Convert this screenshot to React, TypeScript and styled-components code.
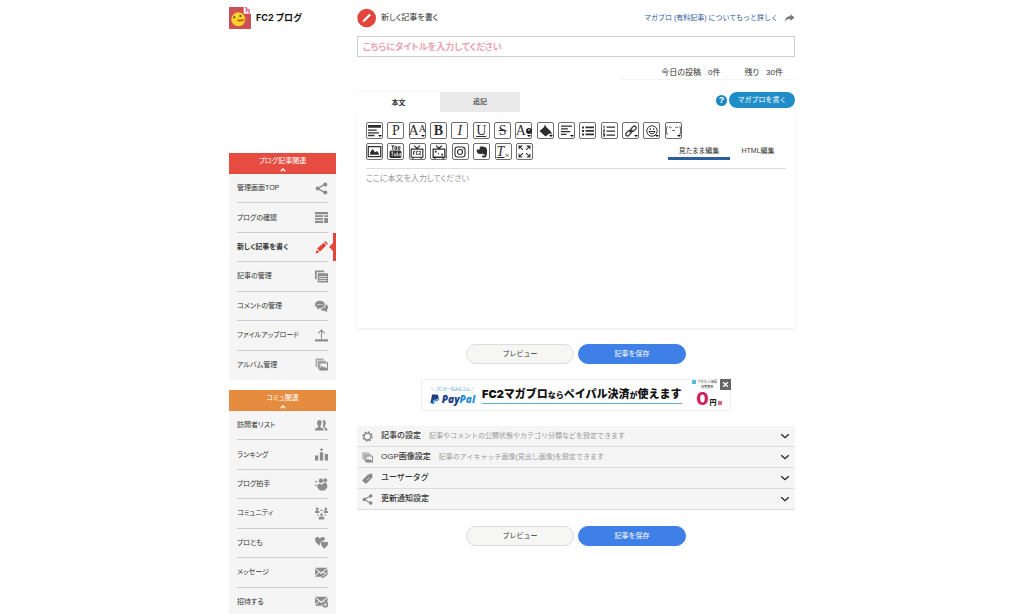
import React from "react";
import styled, { createGlobalStyle, css } from "styled-components";

const Global = createGlobalStyle`
  * { box-sizing: border-box; }
  body {
    margin: 0;
    background: #fff;
    color: #333;
    font-family: "Liberation Sans", "Noto Sans CJK JP", sans-serif;
    font-feature-settings: "palt";
    font-size: 8px;
    line-height: 12px;
  }
  button, input, textarea {
    font: inherit;
    font-feature-settings: inherit;
    color: inherit;
    margin: 0;
    padding: 0;
    border: 0;
    background: none;
  }
  button { cursor: pointer; }
  a { color: inherit; text-decoration: none; }
  ul, h1, h2, p { margin: 0; padding: 0; font: inherit; list-style: none; }
  h1 { font-feature-settings: "palt"; }
  svg { display: block; flex: none; }
`;

const Page = styled.div`
  display: grid;
  grid-template-columns: 107px minmax(0, 1fr);
  column-gap: 21px;
  max-width: 566px;
  margin: 0 auto;
`;

/* ---------- Sidebar ---------- */

const Sidebar = styled.aside`
  display: flex;
  flex-direction: column;
`;

const Brand = styled.a`
  display: flex;
  align-items: center;
  gap: 5px;
  height: 36px;
  margin-bottom: 117px;
  color: #111;
  font-size: 9px;
  font-weight: 700;
  font-family: Inter, "Noto Sans CJK JP", sans-serif;
`;

const MenuGroup = styled.nav`
  margin-bottom: 10px;
`;

const MenuHeader = styled.button<{ $color: string }>`
  display: flex;
  flex-direction: column;
  align-items: center;
  width: 100%;
  height: 21px;
  padding-top: 2px;
  background: ${(p) => p.$color};
  color: #fff;
  font-size: 7px;
`;

const MenuList = styled.ul`
  display: flex;
  flex-direction: column;
  min-height: 206px;
  padding: 0 8px;
  background: #f5f5f5;
`;

const MenuItem = styled.li`
  display: flex;
  flex: 1;
  border-bottom: 1px solid #ccc;
  &:last-child { border-bottom-color: transparent; }
`;

const MenuLink = styled.a<{ $active?: boolean }>`
  display: flex;
  flex: 1;
  align-items: center;
  justify-content: space-between;
  position: relative;
  font-size: 7px;
  color: #333;
  svg { color: #8c8c8c; }
  ${(p) =>
    p.$active &&
    css`
      font-weight: 700;
      svg { color: #e2453c; }
      &::before {
        content: "";
        position: absolute;
        right: -8px;
        top: 0;
        bottom: 0;
        width: 3px;
        background: #e2453c;
      }
      &::after {
        content: "";
        position: absolute;
        right: -5px;
        top: 50%;
        margin-top: -4px;
        border: 4px solid transparent;
        border-left: 0;
        border-right-color: #e2453c;
      }
    `}
`;

/* ---------- Main column ---------- */

const Main = styled.main`
  display: flex;
  flex-direction: column;
`;

const TopBar = styled.header`
  display: flex;
  align-items: center;
  justify-content: space-between;
  height: 36px;
`;

const PageTitle = styled.h1`
  display: flex;
  align-items: center;
  gap: 4px;
`;

const MoreLink = styled.a`
  display: flex;
  align-items: center;
  gap: 6px;
  font-size: 7px;
  font-feature-settings: normal;
  color: #2b5797;
`;

const TitleInput = styled.input`
  width: 100%;
  height: 21px;
  padding: 0 5px;
  border: 1px solid #ccc;
  font-size: 9px;
  font-weight: 700;
  &::placeholder { color: #eba0b1; opacity: 1; }
`;

const Stats = styled.div`
  display: flex;
  justify-content: flex-end;
  gap: 24px;
  align-self: flex-end;
  width: 40%;
  height: 23px;
  padding: 10px 12px 0 0;
  border-bottom: 1px solid #f5f5f5;
`;

const Stat = styled.p`
  display: flex;
  gap: 7px;
`;

const TabBar = styled.div`
  display: flex;
  align-items: flex-start;
  height: 21px;
  margin-top: 12px;
`;

const Tab = styled.button<{ $active?: boolean }>`
  width: ${(p) => (p.$active ? 83 : 80)}px;
  height: ${(p) => (p.$active ? 22 : 20)}px;
  background: ${(p) => (p.$active ? "#fff" : "#e9e9e9")};
  box-shadow: ${(p) => (p.$active ? "0 -1px 2px #f4f4f4" : "none")};
  font-size: 7px;
  font-weight: ${(p) => (p.$active ? 700 : 500)};
`;

const PaidGroup = styled.div`
  display: flex;
  align-items: center;
  gap: 2px;
  margin-left: auto;
`;

const HelpButton = styled.button`
  width: 11px;
  height: 11px;
  border-radius: 50%;
  background: #1b87bf;
  color: #fff;
  font-size: 9px;
  font-weight: 700;
  line-height: 11px;
`;

const PaidButton = styled.button`
  width: 66px;
  height: 16px;
  border-radius: 8px;
  background: #1f8ec8;
  color: #fff;
  font-size: 7px;
  font-feature-settings: normal;
`;

const Editor = styled.section`
  padding: 9px 9px 0;
  box-shadow: 0 1px 3px #ececec;
`;

const ToolRow = styled.div`
  display: flex;
  justify-content: space-between;
  margin-bottom: 4px;
`;

const Tools = styled.div<{ $width: number }>`
  display: flex;
  justify-content: space-between;
  width: ${(p) => p.$width}px;
`;

const Tool = styled.button<{ $menu?: boolean }>`
  display: flex;
  align-items: center;
  justify-content: center;
  position: relative;
  width: 17px;
  height: 17px;
  border: 1px solid #6e6e6e;
  border-radius: 2px;
  color: #2e2e2e;
  font-family: "Liberation Serif", serif;
  font-size: 14px;
  line-height: 15px;
  ${(p) =>
    p.$menu &&
    css`
      &::after {
        content: "";
        position: absolute;
        right: 0;
        bottom: 1px;
        border: 2px solid transparent;
        border-bottom: 0;
        border-top-color: #111;
      }
    `}
`;

const Modes = styled.div`
  display: flex;
  align-items: flex-end;
`;

const Mode = styled.button<{ $active?: boolean }>`
  width: ${(p) => (p.$active ? 62 : 56)}px;
  height: 17px;
  padding-top: 2px;
  border-bottom: 3px solid ${(p) => (p.$active ? "#2c5d9f" : "transparent")};
  font-size: 7px;
`;

const BodyInput = styled.textarea`
  display: block;
  width: 100%;
  height: 160px;
  margin-top: 8px;
  padding-top: 4px;
  border-top: 1px solid #ddd;
  resize: none;
  &::placeholder { color: #999; opacity: 1; }
`;

const Actions = styled.div`
  display: flex;
  justify-content: center;
  gap: 4px;
  margin: 16px 0 15px;
`;

const ActionButton = styled.button<{ $primary?: boolean }>`
  width: 108px;
  height: 20px;
  border: 1px solid ${(p) => (p.$primary ? "#3f7fe8" : "#ddd")};
  border-radius: 10px;
  background: ${(p) => (p.$primary ? "#3f7fe8" : "#f6f6f5")};
  color: ${(p) => (p.$primary ? "#fff" : "#333")};
  font-size: 7px;
  font-feature-settings: normal;
`;

/* ---------- Campaign banner ---------- */

const Banner = styled.section`
  display: flex;
  align-items: center;
  align-self: center;
  position: relative;
  width: 310px;
  height: 32px;
  margin-bottom: 15px;
  padding: 0 4px 0 7px;
  border: 1px solid #f1f1f1;
  font-family: "Noto Sans CJK JP", sans-serif;
`;

const Partner = styled.div`
  display: flex;
  flex-direction: column;
  align-items: center;
  width: 47px;
  margin-right: 6px;
  color: #2f93c4;
  font-size: 4px;
  line-height: 8px;
`;

const PartnerName = styled.span`
  display: flex;
  align-items: center;
  gap: 2px;
  color: #1c3f86;
  font-family: "Open Sans", sans-serif;
  font-size: 10px;
  font-weight: 800;
  font-style: italic;
  line-height: 12px;
  b { color: #2a8fd0; font-weight: 800; }
`;

const Slogan = styled.a`
  border-bottom: 1px solid #58b5c0;
  color: #111;
  font-family: Inter, "Noto Sans CJK JP", sans-serif;
  font-size: 11px;
  font-weight: 900;
  font-feature-settings: normal;
  line-height: 16px;
  white-space: nowrap;
  small { font-size: 8px; }
`;

const Offer = styled.div`
  display: flex;
  flex-direction: column;
  align-items: center;
  margin-left: auto;
  color: #222;
  font-size: 3px;
  line-height: 5px;
`;

const OfferNote = styled.span`
  display: flex;
  gap: 2px;
  margin-right: 9px;
  text-align: center;
  white-space: nowrap;
`;

const OfferText = styled.span`
  display: flex;
  flex-direction: column;
`;

const Swatch = styled.i<{ $color: string }>`
  width: 4px;
  height: 4px;
  background: ${(p) => p.$color};
`;

const OfferPrice = styled.span`
  display: flex;
  align-items: baseline;
  gap: 1px;
  font-size: 7px;
  font-weight: 900;
  line-height: 18px;
  b {
    color: #cc1f60;
    font-family: Inter, sans-serif;
    font-size: 18px;
    font-weight: 800;
  }
`;

const CloseButton = styled.button`
  display: flex;
  align-items: center;
  justify-content: center;
  position: absolute;
  top: -1px;
  right: -1px;
  width: 11px;
  height: 11px;
  background: #666;
  color: #fff;
`;

/* ---------- Settings accordion ---------- */

const Settings = styled.section`
  background: #f5f5f5;
`;

const SettingRow = styled.button`
  display: flex;
  align-items: center;
  width: 100%;
  height: 21px;
  padding: 0 5px;
  border-bottom: 1px solid #ddd;
  font-size: 8px;
  font-feature-settings: normal;
  text-align: left;
  svg { color: #888; }
  svg:last-child { margin-left: auto; color: #222; }
`;

const SettingName = styled.span`
  margin: 0 8px;
  font-weight: 500;
`;

const SettingNote = styled.span`
  color: #999;
  font-size: 7px;
`;

/* ---------- Icons ---------- */

const share = (
  <>
    <path d="M19 4 5 12l14 8" fill="none" stroke="currentColor" strokeWidth="2.5" />
    <circle cx="19" cy="4.5" r="3.8" />
    <circle cx="5" cy="12" r="3.8" />
    <circle cx="19" cy="19.5" r="3.8" />
  </>
);
const photos = (
  <>
    <path d="M1 1h15v3H4v12H1z" opacity=".7" />
    <path d="M5 5h15v3H8v12H5z" opacity=".8" />
    <path fillRule="evenodd" d="M8 8h16v15H8zM10 10v9l3-5 3 4 2-2 4 4V10z" />
  </>
);
const envelope = (
  <path d="M0 3h23L11.500 12zM0 5l7 6-7 6zM23 5l-7 6 7 3zM8 12l3.500 3 3.500-3 3 2-6 6H0z" />
);

const ICONS: Record<string, React.ReactNode> = {
  share,
  photos,
  layout: <path d="M0 2h24v4H0zM0 8h15v3H0zM0 13h15v3H0zM0 18h15v4H0zM17 8h7v3h-7zM17 13h7v9h-7z" />,
  pencil: <path d="M1 23l2-7 5 5zM4 14 16 3l5 5L9 20zM17 2l2-2 5 5-2 2z" />,
  pages: (
    <>
      <path d="M0 1h17v3H3v13H0z" />
      <path d="M5 6h19v17H5zM7 11v1.500h15V11zM7 15v1.500h15V15zM7 19v1.500h15V19z" fillRule="evenodd" />
    </>
  ),
  comments: (
    <>
      <path d="M9 3c5 0 9 3 9 7s-4 7-9 7l-5 3 1-4c-3-1-5-3-5-6 0-4 4-7 9-7z" />
      <path d="M20 9c5 3 5 8 2 11l1 4-5-2c-4 0-7-1-8-4 6 0 10-4 10-9z" />
      <path d="M4 9h2v2H4zM8 9h2v2H8zM12 9h2v2h-2z" fill="#f5f5f5" />
    </>
  ),
  upload: (
    <>
      <path d="M12 18V3M6 8l6-6 6 6" fill="none" stroke="currentColor" strokeWidth="2" />
      <path d="M0 19h24v4H0z" />
    </>
  ),
  people: (
    <>
      <path d="M8 2c6 0 5 8 2 11v2l6 3v3H0v-3l6-3v-2C3 10 3 2 8 2z" />
      <path d="M14 2c7-1 7 7 4 11v2l5 3v3h-5v-4l-4-3c2-4 2-8 0-12z" />
    </>
  ),
  ranking: <path d="M0 14h6v9H0zM9 8h6v15H9zM18 11h6v12h-6zM12 0l3 3-3 3-3-3z" />,
  clap: (
    <>
      <path d="M5 12l4-2 3 3 6-5 4 3 1 6-5 6H9l-5-6z" />
      <circle cx="11" cy="5" r="4" />
      <circle cx="19" cy="4" r="3.500" />
      <path d="M0 5l5 1-3 3zM0 12l4 1-3 3z" />
    </>
  ),
  community: (
    <>
      <circle cx="4" cy="3.500" r="2.5" />
      <circle cx="20" cy="3.500" r="2.5" />
      <circle cx="12" cy="14" r="2.500" />
      <path d="M0 11V8l4-2 4 2v3zM16 11V8l4-2 4 2v3zM7 23v-4l5-2 5 2v4z" />
      <path d="M9 6h6M4 13l3 4M20 13l-3 4" fill="none" stroke="currentColor" strokeWidth="1.800" />
    </>
  ),
  hearts: (
    <>
      <path d="M9 18C-3 11-1 2 4 2c2 0 4 1 5 3 1-2 3-3 5-3 4 0 5 3 4 6-6 0-9 4-9 10z" />
      <path d="M17 23c-7-5-8-13-3-13 2 0 3 1 4 2 1-1 3-2 5-1 3 2 0 9-6 12z" />
    </>
  ),
  message: (
    <>
      {envelope}
      <path d="M12 23l1-3 9-7 2 2-9 7z" />
    </>
  ),
  invite: (
    <>
      {envelope}
      <circle cx="19" cy="18" r="5.5" />
      <path d="M19 15v6M16 18h6" stroke="#f5f5f5" strokeWidth="1.500" />
    </>
  ),
  gear: (
    <>
      <circle cx="12" cy="12" r="7.500" fill="none" stroke="currentColor" strokeWidth="3" />
      <circle cx="12" cy="12" r="10" fill="none" stroke="currentColor" strokeWidth="3" strokeDasharray="4 3.850" />
    </>
  ),
  tag: <path d="M1 15 13 3l9-2 1 8-12 13c-2 2-3 2-5 0l-4-4c-2-1-2-2-1-3zM10 15l1 1 6-6-1-1z" fillRule="evenodd" />,
  forward: <path d="M1 21c1-9 6-13 13-13V3l10 8-10 8v-5c-6 0-10 2-13 7z" />,
  down: <path d="M3 8l9 8 9-8" fill="none" stroke="currentColor" strokeWidth="3.200" />,
  up: <path d="M3 17l9-9 9 9" fill="none" stroke="currentColor" strokeWidth="5" />,
  close: <path d="M4 4l16 16M20 4 4 20" fill="none" stroke="currentColor" strokeWidth="4.500" />,
  paypal: (
    <>
      <path d="M5 1h10c8 0 8 13-3 13H9l-2 8H1z" fill="#1c3f86" />
      <path d="M21 7c4 7-2 11-10 11l-1 6H5l1-4h3l1-5h4c4 0 7-3 7-8z" fill="#2a8fd0" />
    </>
  ),
  template: <path d="M0 2h24v5H0zM0 10h16v2.500H0zM0 15h20v2.500H0zM0 20h12v2.500H0z" />,
  bucket: <path d="M11 1l2 4 8 8c2 2 3 5 2 7l-3-3-8 6L1 13l8-7z" />,
  alignLeft: <path d="M0 1h24v3H0zM0 7h15v3H0zM0 13h20v3H0zM0 19h12v3H0z" />,
  bullets: <path d="M0 3h4v4H0zM0 10h4v4H0zM0 17h4v4H0zM7 3h17v3.500H7zM7 10h17v3.500H7zM7 17h17v3.500H7z" />,
  numbers: <path d="M1 1h2v6H1zM0 9h4v2l-2 3h2v1H0v-2l2-2H0zM0 17h4v6H0v-1h2v-1H0zM7 3h17v2.500H7zM7 11h17v2.500H7zM7 19h17v2.500H7z" />,
  link: (
    <g fill="none" stroke="currentColor" strokeWidth="2.500">
      <rect x="1" y="13" width="12" height="7" rx="3.500" transform="rotate(-45 7 16.500)" />
      <rect x="11" y="4" width="12" height="7" rx="3.500" transform="rotate(-45 17 7.500)" />
      <path d="M9 15l6-6" />
    </g>
  ),
  smile: (
    <g fill="none" stroke="currentColor" strokeWidth="2">
      <circle cx="12" cy="12" r="10.500" />
      <path d="M6 13c1 6 11 6 12 0zM8.500 6v4M15.500 6v4" />
    </g>
  ),
  kaomoji: (
    <path
      d="M2 5c-2 5-2 9 0 14M22 5c2 5 2 9 0 14M5 8l2-2 2 2M15 8l2-2 2 2M10 12h4"
      fill="none"
      stroke="currentColor"
      strokeWidth="1.300"
    />
  ),
  image: (
    <>
      <path d="M2 4h20v16H2z" fill="none" stroke="currentColor" strokeWidth="2" />
      <path d="M5 17v-4l4-5 4 5 3-2 3 4v2z" />
    </>
  ),
  youtube: (
    <>
      <path d="M5 0l2 4 2-4M7 4v5M11 3h3v5h-3zM17 2v6h3V2" fill="none" stroke="currentColor" strokeWidth="1.800" />
      <rect x="1" y="10" width="22" height="14" rx="3" />
      <path d="M4 13h4M6 13v8M10 15v5h3v-5M15 12v8h2v-4M22 20h-2v-4h2v2h-2" fill="none" stroke="#fff" strokeWidth="1.300" />
    </>
  ),
  tv: (
    <>
      <path d="M7 1l5 5 5-5M2 7h20v14H2zM5 21v3M19 21v3" fill="none" stroke="currentColor" strokeWidth="2" />
      <path d="M6 17v-6h3M6 14h2M14 11h-3v5h3M15 11h3v2l-3 3h4" fill="none" stroke="currentColor" strokeWidth="1.500" />
    </>
  ),
  tvLive: (
    <>
      <path d="M7 1l5 5 5-5M2 7h20v14H2zM5 21v3M19 21v3" fill="none" stroke="currentColor" strokeWidth="2.200" />
      <path d="M5 10h3v3H5zM16 15h3v3h-3zM10 14h2v2h-2z" />
    </>
  ),
  instagram: (
    <g fill="none" stroke="currentColor" strokeWidth="2.200">
      <rect x="2" y="2" width="20" height="20" rx="5" />
      <circle cx="12" cy="12" r="5" />
      <path d="M17 6h2" />
    </g>
  ),
  elephant: (
    <path d="M8 1h6c5 1 8 2 8 8 0 7-1 14-4 14h-4c-3-1-2-5 1-5v2c2 0 3-1 2-3-3-1-5-2-5-2-2 2-7 1-9-1-2-3-2-6-1-7h5z" />
  ),
  expand: (
    <path
      d="M2 8V2h6M16 2h6v6M22 16v6h-6M8 22H2v-6M2 2l7 7M22 2l-7 7M22 22l-7-7M2 22l7-7"
      fill="none"
      stroke="currentColor"
      strokeWidth="2"
    />
  ),
};

const Icon = ({ name, size = 13 }: { name: string; size?: number }) => (
  <svg width={size} height={size} viewBox="0 0 24 24" fill="currentColor" aria-hidden="true">
    {ICONS[name]}
  </svg>
);

const Logo = () => (
  <svg width="22" height="22" viewBox="0 0 66 66" aria-hidden="true">
    <path d="M0 0h44l22 20v46H0z" fill="#cf4f56" />
    <path d="M44 0v20h22z" fill="#fff" />
    <path d="M48 3c3-3 6 0 5 4l-2 9M54 10c5-5 11 2 4 9" fill="none" stroke="#e0668c" strokeWidth="4" />
    <circle cx="28" cy="37" r="21" fill="#fbd32b" />
    <circle cx="16" cy="31" r="3" fill="#4b3210" />
    <circle cx="34" cy="27" r="3" fill="#4b3210" />
    <path d="M24 38l20-3c5 0 5 8-1 8l-12 2c-4 0-6-3-7-7z" fill="#e88a22" />
    <path d="M25 40l18 0" stroke="#a04a12" strokeWidth="2" />
  </svg>
);

const TitleBadge = () => (
  <svg width="20" height="20" viewBox="0 0 60 60" aria-hidden="true">
    <circle cx="29" cy="30" r="28" fill="#e2453c" />
    <path d="M16 43l3-8 18-18 5 5-18 18z" fill="#fff" />
  </svg>
);

/* ---------- Content ---------- */

type Entry = { label: string; icon: string; active?: boolean };

const BLOG_MENU: Entry[] = [
  { label: "管理画面TOP", icon: "share" },
  { label: "ブログの確認", icon: "layout" },
  { label: "新しく記事を書く", icon: "pencil", active: true },
  { label: "記事の管理", icon: "pages" },
  { label: "コメントの管理", icon: "comments" },
  { label: "ファイルアップロード", icon: "upload" },
  { label: "アルバム管理", icon: "photos" },
];

const COMMUNITY_MENU: Entry[] = [
  { label: "訪問者リスト", icon: "people" },
  { label: "ランキング", icon: "ranking" },
  { label: "ブログ拍手", icon: "clap" },
  { label: "コミュニティ", icon: "community" },
  { label: "ブロとも", icon: "hearts" },
  { label: "メッセージ", icon: "message" },
  { label: "招待する", icon: "invite" },
];

const SETTINGS = [
  { icon: "gear", name: "記事の設定", note: "記事やコメントの公開状態やカテゴリ分類などを設定できます" },
  { icon: "photos", name: "OGP画像設定", note: "記事のアイキャッチ画像(見出し画像)を設定できます" },
  { icon: "tag", name: "ユーザータグ" },
  { icon: "share", name: "更新通知設定" },
];

const Menu = ({ title, color, items }: { title: string; color: string; items: Entry[] }) => (
  <MenuGroup aria-label={title}>
    <MenuHeader $color={color}>
      {title}
      <Icon name="up" size={6} />
    </MenuHeader>
    <MenuList>
      {items.map((item) => (
        <MenuItem key={item.label}>
          <MenuLink href="#" $active={item.active}>
            {item.label}
            <Icon name={item.icon} />
          </MenuLink>
        </MenuItem>
      ))}
    </MenuList>
  </MenuGroup>
);

const SaveActions = () => (
  <Actions>
    <ActionButton>プレビュー</ActionButton>
    <ActionButton $primary>記事を保存</ActionButton>
  </Actions>
);

const SmallCap = styled.span`
  align-self: flex-start;
  font-size: 10px;
  line-height: 11px;
`;

const Sub = styled.sub`
  align-self: flex-end;
  font-size: 9px;
  line-height: 8px;
`;

export default function App() {
  return (
    <>
      <Global />
      <Page>
        <Sidebar>
          <Brand href="#">
            <Logo />
            FC2 ブログ
          </Brand>
          <Menu title="ブログ記事関連" color="#e64c40" items={BLOG_MENU} />
          <Menu title="コミュ関連" color="#e58c3e" items={COMMUNITY_MENU} />
        </Sidebar>

        <Main>
          <TopBar>
            <PageTitle>
              <TitleBadge />
              新しく記事を書く
            </PageTitle>
            <MoreLink href="#">
              マガブロ (有料記事) についてもっと詳しく
              <svg width="11" height="10" viewBox="0 0 24 24" fill="#777" aria-hidden="true">
                {ICONS.forward}
              </svg>
            </MoreLink>
          </TopBar>

          <TitleInput aria-label="タイトル" placeholder="こちらにタイトルを入力してください" />

          <Stats>
            <Stat>
              <span>今日の投稿</span>
              <span>0件</span>
            </Stat>
            <Stat>
              <span>残り</span>
              <span>30件</span>
            </Stat>
          </Stats>

          <TabBar>
            <Tab $active>本文</Tab>
            <Tab>追記</Tab>
            <PaidGroup>
              <HelpButton>?</HelpButton>
              <PaidButton>マガブロを書く</PaidButton>
            </PaidGroup>
          </TabBar>

          <Editor>
            <ToolRow>
              <Tools $width={316}>
                <Tool $menu aria-label="テンプレート"><Icon name="template" /></Tool>
                <Tool>P</Tool>
                <Tool $menu>A<SmallCap>A</SmallCap></Tool>
                <Tool><b>B</b></Tool>
                <Tool><i>I</i></Tool>
                <Tool><u>U</u></Tool>
                <Tool><s>S</s></Tool>
                <Tool $menu aria-label="文字色">
                  A
                  <svg width="6" height="6" viewBox="0 0 6 6" aria-hidden="true">
                    <circle cx="3" cy="3" r="3" fill="#222" />
                    <circle cx="3" cy="2" r="1" fill="#aaa" />
                  </svg>
                </Tool>
                <Tool $menu aria-label="背景色"><Icon name="bucket" /></Tool>
                <Tool $menu aria-label="配置"><Icon name="alignLeft" size={11} /></Tool>
                <Tool aria-label="リスト"><Icon name="bullets" size={12} /></Tool>
                <Tool aria-label="番号リスト"><Icon name="numbers" size={12} /></Tool>
                <Tool $menu aria-label="リンク"><Icon name="link" size={12} /></Tool>
                <Tool $menu aria-label="絵文字"><Icon name="smile" size={12} /></Tool>
                <Tool $menu aria-label="顔文字"><Icon name="kaomoji" size={15} /></Tool>
              </Tools>
            </ToolRow>
            <ToolRow>
              <Tools $width={167}>
                <Tool aria-label="画像"><Icon name="image" size={15} /></Tool>
                <Tool aria-label="YouTube"><Icon name="youtube" /></Tool>
                <Tool aria-label="FC2動画"><Icon name="tv" size={14} /></Tool>
                <Tool aria-label="ライブ"><Icon name="tvLive" size={14} /></Tool>
                <Tool aria-label="Instagram"><Icon name="instagram" size={12} /></Tool>
                <Tool aria-label="Evernote"><Icon name="elephant" size={12} /></Tool>
                <Tool><i><u>T</u></i><Sub>×</Sub></Tool>
                <Tool aria-label="全画面"><Icon name="expand" /></Tool>
              </Tools>
              <Modes>
                <Mode $active>見たまま編集</Mode>
                <Mode>HTML編集</Mode>
              </Modes>
            </ToolRow>
            <BodyInput aria-label="本文" placeholder="ここに本文を入力してください" />
          </Editor>

          <SaveActions />

          <Banner>
            <Partner>
              ＼ ブロガーのみなさん ／
              <PartnerName>
                <Icon name="paypal" size={10} />
                <span>Pay<b>Pal</b></span>
              </PartnerName>
            </Partner>
            <Slogan href="#">
              FC2マガブロ<small>なら</small>ペイパル決済<small>が</small>使えます
            </Slogan>
            <Offer>
              <OfferNote>
                <Swatch $color="#58bcd6" />
                <OfferText>
                  <span>アカウント開設</span>
                  <span>初期費用</span>
                </OfferText>
              </OfferNote>
              <OfferPrice>
                <b>0</b>円 <Swatch $color="#d9658f" />
              </OfferPrice>
            </Offer>
            <CloseButton aria-label="閉じる"><Icon name="close" size={7} /></CloseButton>
          </Banner>

          <Settings>
            {SETTINGS.map((row) => (
              <SettingRow key={row.name}>
                <Icon name={row.icon} size={11} />
                <SettingName>{row.name}</SettingName>
                {row.note && <SettingNote>{row.note}</SettingNote>}
                <Icon name="down" size={10} />
              </SettingRow>
            ))}
          </Settings>

          <SaveActions />
        </Main>
      </Page>
    </>
  );
}
